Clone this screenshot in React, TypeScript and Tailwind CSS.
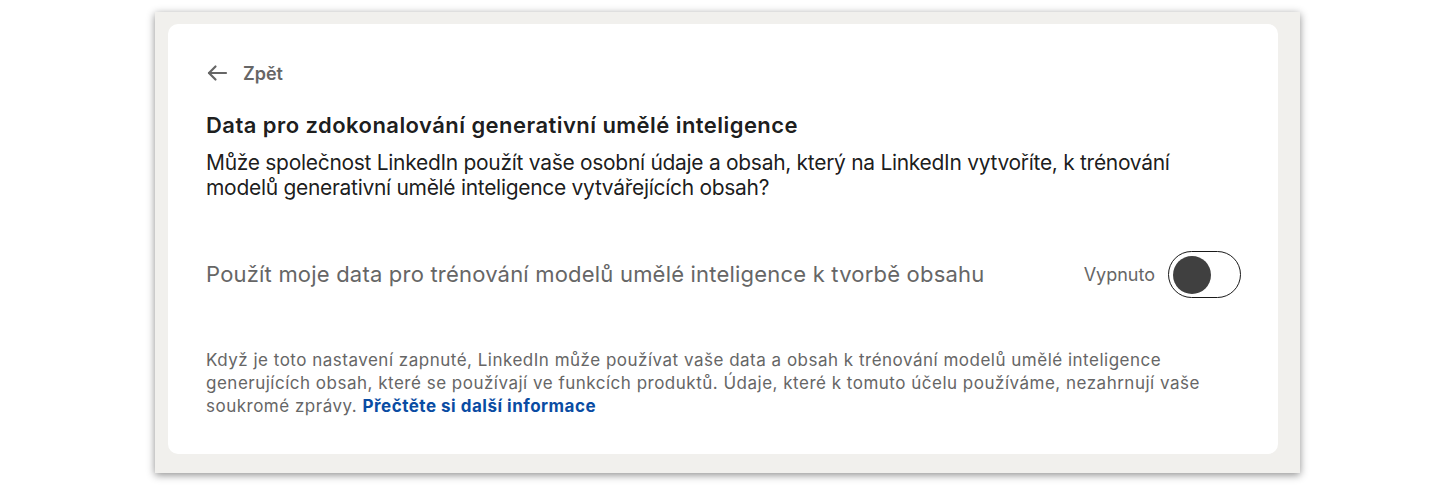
import React from "react";

export default function App() {
  return (
    <div className="w-[1456px] h-[486px] bg-white pt-[12px] pl-[155px]" style={{ fontFamily: "Inter, 'Noto Sans', sans-serif" }}>
      <div className="w-[1145px] h-[461px] bg-[#f1f0ed] shadow-[0_2px_8px_rgba(0,0,0,0.45)] pt-[12px] pl-[13px]">
        <div className="w-[1110px] h-[430px] bg-white rounded-[10px] pl-[38px] pr-[37px] pt-[37px] flex flex-col">
          <div className="flex items-center gap-[15px] h-[24px] text-[#666666]">
            <svg width="22" height="18" viewBox="0 0 22 18" fill="none" stroke="#666666" strokeWidth="2.2" strokeLinecap="round" strokeLinejoin="round">
              <path d="M20 9H3" />
              <path d="M9.5 2.5L3 9l6.5 6.5" />
            </svg>
            <span className="text-[18px] font-semibold">Zpět</span>
          </div>
          <h1 className="mt-[28px] text-[22px] leading-[25px] font-semibold tracking-[0.45px] text-[rgba(0,0,0,0.9)]">
            Data pro zdokonalování generativní umělé inteligence
          </h1>
          <p className="mt-[12px] w-[1000px] text-[21px] leading-[25px] tracking-[-0.3px] text-[rgba(0,0,0,0.9)]">
            Může společnost LinkedIn použít vaše osobní údaje a obsah, který na LinkedIn vytvoříte, k trénování modelů generativní umělé inteligence vytvářejících obsah?
          </p>
          <div className="mt-[51px] flex items-center justify-between h-[47px]">
            <span className="text-[22px] tracking-[0.2px] text-[#666666]">
              Použít moje data pro trénování modelů umělé inteligence k tvorbě obsahu
            </span>
            <div className="flex items-center gap-[13px]">
              <span className="text-[18px] text-[#666666]">Vypnuto</span>
              <div className="w-[73px] h-[47px] rounded-full border-[1.5px] border-[#1a1a1a] flex items-center pl-[4px]">
                <div className="w-[38px] h-[38px] rounded-full bg-[#404040]" />
              </div>
            </div>
          </div>
          <p className="mt-[51px] w-[1010px] text-[17px] leading-[23px] tracking-[0.5px] text-[#666666]">
            Když je toto nastavení zapnuté, LinkedIn může používat vaše data a obsah k trénování modelů umělé inteligence generujících obsah, které se používají ve funkcích produktů. Údaje, které k tomuto účelu používáme, nezahrnují vaše soukromé zprávy.{" "}
            <a className="font-bold text-[#0a4ca3]">Přečtěte si další informace</a>
          </p>
        </div>
      </div>
    </div>
  );
}
